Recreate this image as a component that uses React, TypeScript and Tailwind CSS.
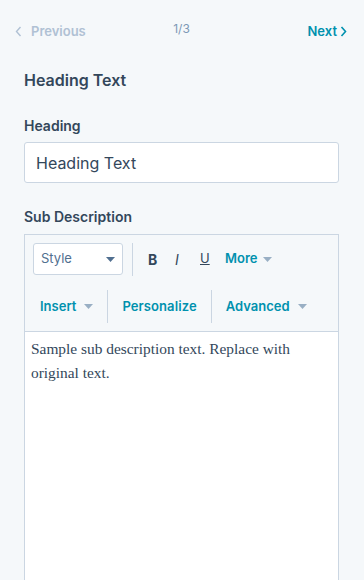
import React from 'react';

const Caret = ({ className = '' }: { className?: string }) => (
  <svg width="9" height="5" viewBox="0 0 9 5" className={className}>
    <path d="M0 0h9L4.5 5z" fill="currentColor" />
  </svg>
);

export default function App() {
  return (
    <div
      className="w-[364px] h-[580px] overflow-hidden bg-[#f5f8fa] text-[#33475b]"
      style={{ fontFamily: 'Inter, "Noto Sans", sans-serif' }}
    >
      {/* pager */}
      <div className="grid grid-cols-3 items-start pl-[15px] pr-[17px] pt-[20px] h-[68px]">
        <button className="flex items-center gap-[9px] mt-[2px] text-[13px] font-semibold text-[#b0c1d4]">
          <svg width="7" height="11" viewBox="0 0 7 11">
            <path d="M5.5 1L1.5 5.5 5.5 10" fill="none" stroke="currentColor" strokeWidth="1.4" />
          </svg>
          Previous
        </button>
        <span className="text-center text-[12px] text-[#7c98b6] pl-[1px]">1/3</span>
        <button className="flex items-center justify-end gap-[3px] mt-[2px] text-[13px] font-semibold text-[#0091ae]">
          Next
          <svg width="7" height="11" viewBox="0 0 7 11">
            <path d="M1.5 1L5.5 5.5 1.5 10" fill="none" stroke="currentColor" strokeWidth="1.6" />
          </svg>
        </button>
      </div>

      <div className="px-[24px] pr-[25px]">
        <h2 className="text-[16px] font-semibold leading-[24px] mb-[24px]">Heading Text</h2>

        <label className="block text-[14px] font-semibold leading-[20px] mb-[6px]">Heading</label>
        <input
          className="w-full h-[41px] px-[11px] bg-white border border-[#cbd6e2] rounded-[3px] text-[16px] text-[#33475b] outline-none"
          defaultValue="Heading Text"
        />

        <label className="block text-[14px] font-semibold leading-[20px] mt-[24px] mb-[7px]">
          Sub Description
        </label>

        <div className="border border-[#cbd6e2] bg-white">
          <div className="bg-[#f5f8fa] border-b border-[#cbd6e2]">
            <div className="flex items-start h-[50px] pt-[8px] pl-[8px]">
              <div className="flex items-center justify-between w-[90px] h-[32px] px-[7px] pr-[7px] bg-white border border-[#cbd6e2] rounded-[3px] text-[13px] text-[#516f90]">
                Style
                <Caret className="text-[#516f90]" />
              </div>
              <div className="w-px h-[33px] bg-[#cbd6e2] ml-[9px] mr-[15px]" />
              <div className="flex items-center h-[32px]">
                <span className="text-[14px] font-bold w-[27px]">B</span>
                <span className="text-[14px] italic w-[25px]" style={{ fontFamily: 'Inter, serif' }}>I</span>
                <span className="text-[13px] underline w-[25px]">U</span>
                <span className="flex items-center gap-[6px] text-[13px] font-semibold text-[#0091ae]">
                  More <Caret className="text-[#99afc4]" />
                </span>
              </div>
            </div>
            <div className="flex items-start h-[46px] pt-[5px]">
              <span className="flex items-center h-[33px] gap-[8px] pl-[15px] pr-[14px] text-[13px] font-semibold text-[#0091ae]">
                Insert <Caret className="text-[#99afc4]" />
              </span>
              <div className="w-px h-[33px] bg-[#cbd6e2]" />
              <span className="flex items-center h-[33px] px-[14px] text-[13px] font-semibold text-[#0091ae] tracking-[0.1px]">
                Personalize
              </span>
              <div className="w-px h-[33px] bg-[#cbd6e2]" />
              <span className="flex items-center h-[33px] gap-[8px] pl-[14px] text-[13px] font-semibold text-[#0091ae]">
                Advanced <Caret className="text-[#99afc4]" />
              </span>
            </div>
          </div>
          <div
            className="h-[300px] px-[6px] pt-[5px] text-[15.4px] leading-[24px] text-[#33475b]"
            style={{ fontFamily: '"Liberation Serif", serif' }}
          >
            Sample sub description text. Replace with original text.
          </div>
        </div>
      </div>
    </div>
  );
}
